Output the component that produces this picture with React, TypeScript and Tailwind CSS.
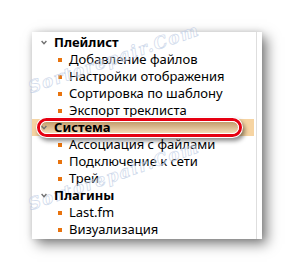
import React from "react";

type Group = { title: string; items: string[]; active?: boolean };

const groups: Group[] = [
  {
    title: "Плейлист",
    items: ["Добавление файлов", "Настройки отображения", "Сортировка по шаблону", "Экспорт треклиста"],
  },
  { title: "Система", items: ["Ассоциация с файлами", "Подключение к сети", "Трей"], active: true },
  { title: "Плагины", items: ["Last.fm", "Визуализация"] },
];

const Chevron = () => (
  <svg width="6" height="5" viewBox="0 0 6 5" className="shrink-0">
    <path d="M0.6 1 L3 3.6 L5.4 1" fill="none" stroke="#707070" strokeWidth="1.4" />
  </svg>
);

const Pill = () => (
  <div className="absolute left-[4px] top-[-2px] h-[21px] w-[207px] rounded-full bg-white p-[1px] shadow-[2px_3px_4px_rgba(0,0,0,0.45)]">
    <div className="h-full w-full rounded-full border-[3px] border-[#e60012]">
      <div className="h-full w-full rounded-full border border-white bg-gradient-to-b from-[#c39c6c] to-[#f3dcb8]" />
    </div>
  </div>
);

const Watermark = ({ top }: { top: string }) => (
  <div
    className={`pointer-events-none absolute left-[114px] ${top} -translate-x-1/2 -translate-y-1/2 -rotate-[19deg] whitespace-nowrap text-[17px] font-bold italic tracking-[1.5px] text-white/60 opacity-70 [-webkit-text-stroke:0.7px_#b9c9e3]`}
    style={{ fontFamily: '"DejaVu Serif", serif' }}
  >
    Sortorepair.Com
  </div>
);

export default function App() {
  return (
    <div
      className="relative h-[271px] w-[295px] overflow-hidden bg-white pl-[32px] pt-[32px] text-[13px] text-black"
      style={{ fontFamily: '"Noto Sans", "Open Sans", sans-serif' }}
    >
      <div className="flex h-[207px] w-[230px] bg-white shadow-[0_0_6px_rgba(0,0,0,0.12),5px_5px_12px_rgba(0,0,0,0.5)]">
        <div className="w-[225px] border-r border-[#dedede] pt-[2px]">
          {groups.map((g) => (
            <div key={g.title}>
              <div className={`relative mr-[2px] flex h-[17px] items-center ${g.active ? "bg-[#f6d4a2]" : ""}`}>
                {g.active && <Pill />}
                <div className="relative z-10 flex items-center pl-[9px]">
                  <Chevron />
                  <span className="ml-[7px] font-bold leading-none">{g.title}</span>
                </div>
              </div>
              {g.items.map((it) => (
                <div key={it} className="flex h-[17px] items-center pl-[26px]">
                  <span className="h-[4px] w-[4px] shrink-0 bg-[#e8730e]" />
                  <span className="ml-[7px] leading-none">{it}</span>
                </div>
              ))}
            </div>
          ))}
        </div>
      </div>
      <Watermark top="top-[59px]" />
      <Watermark top="top-[176px]" />
    </div>
  );
}
